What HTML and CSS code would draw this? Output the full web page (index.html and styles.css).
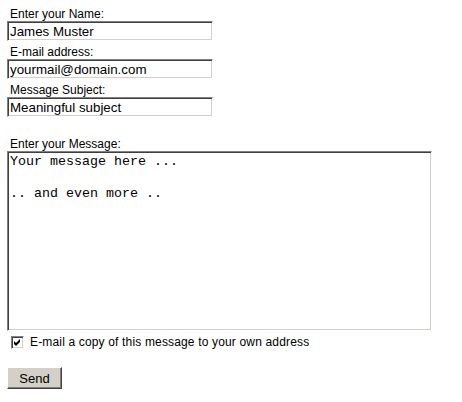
FILE: index.html
```html
<!DOCTYPE html>
<html lang="en">
<head>
<meta charset="utf-8">
<title>Contact form</title>
<link rel="stylesheet" href="styles.css">
</head>
<body>
<form class="form">
  <div class="label">Enter your Name:</div>
  <input class="field" type="text" value="James Muster">
  <div class="label">E-mail address:</div>
  <input class="field" type="text" value="yourmail@domain.com">
  <div class="label">Message Subject:</div>
  <input class="field" type="text" value="Meaningful subject">
  <div class="label label-gap">Enter your Message:</div>
  <textarea class="message">Your message here ...

.. and even more ..</textarea>
  <div class="copy">
    <span class="check"><svg width="9" height="9" viewBox="0 0 9 9"><path d="M1 3 L3 5 L7 1 L7 4 L3 8 L1 6 Z" fill="#000"/></svg></span>
    <span class="copy-text">E-mail a copy of this message to your own address</span>
  </div>
  <button class="send" type="button">Send</button>
</form>
</body>
</html>
```
FILE: styles.css
```css
html, body {
  margin: 0;
  padding: 0;
  background: #fff;
}
body {
  font-family: "Liberation Sans", Arial, sans-serif;
  font-size: 12px;
  color: #000;
}
.form {
  display: flex;
  flex-direction: column;
  align-items: flex-start;
  padding: 3px 0 0 7px;
}
.label {
  box-sizing: border-box;
  height: 18px;
  padding: 4px 0 0 3px;
  line-height: 14px;
  font-size: 12px;
}
.label-gap {
  margin-top: 16px;
}
.field {
  box-sizing: border-box;
  display: block;
  width: 206px;
  height: 20px;
  margin: 0;
  padding: 0 1px 0 2px;
  font-family: "Liberation Sans", Arial, sans-serif;
  font-size: 13.33px;
  color: #000;
  background: #fff;
  border: 1px solid;
  border-color: #808080 #fff #fff #808080;
  box-shadow: inset 1px 1px 0 #404040, inset -1px -1px 0 #d4d0c8;
  outline: none;
}
.message {
  box-sizing: border-box;
  display: block;
  width: 425px;
  height: 180px;
  margin: 0;
  padding: 2px 1px 1px 2px;
  font-family: "Liberation Mono", "Courier New", monospace;
  font-size: 13.33px;
  line-height: 16px;
  color: #000;
  background: #fff;
  border: 1px solid;
  border-color: #808080 #fff #fff #808080;
  box-shadow: inset 1px 1px 0 #404040, inset -1px -1px 0 #d4d0c8;
  resize: none;
  overflow: hidden;
  outline: none;
}
.copy {
  display: flex;
  align-items: center;
  height: 16px;
  margin-top: 3px;
  padding-left: 4px;
}
.check {
  box-sizing: border-box;
  display: flex;
  align-items: center;
  justify-content: center;
  width: 13px;
  height: 13px;
  padding: 0;
  background: #fff;
  border: 1px solid;
  border-color: #808080 #fff #fff #808080;
  box-shadow: inset 1px 1px 0 #404040, inset -1px -1px 0 #d4d0c8;
}
.check svg {
  display: block;
}
.copy-text {
  margin-left: 6px;
  font-size: 12px;
  line-height: 16px;
  letter-spacing: 0.16px;
}
.send {
  box-sizing: border-box;
  width: 55px;
  height: 22px;
  margin-top: 17px;
  padding: 0;
  font-family: "Liberation Sans", Arial, sans-serif;
  font-size: 13px;
  color: #000;
  background: #d4d0c8;
  border: 1px solid;
  border-color: #fff #404040 #404040 #fff;
  box-shadow: inset -1px -1px 0 #808080, inset 1px 1px 0 #d4d0c8;
}
```
